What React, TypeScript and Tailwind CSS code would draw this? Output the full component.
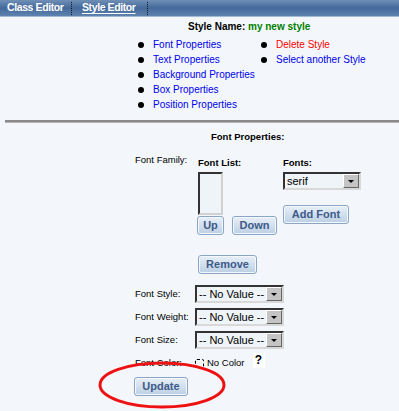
import React from "react";

const arial = { fontFamily: '"Liberation Sans", Arial, sans-serif' };

function Bullet({ children, color }: { children: React.ReactNode; color: string }) {
  return (
    <div className="flex items-center h-[15px]">
      <span className="w-[6px] h-[6px] rounded-full bg-black mr-[9px] shrink-0" />
      <span className={`${color} whitespace-nowrap`}>{children}</span>
    </div>
  );
}

function Btn({ children, w }: { children: React.ReactNode; w: string }) {
  return (
    <div
      className={`${w} h-[19px] flex items-center justify-center rounded-[3px] border border-[#8aa6c6] bg-gradient-to-b from-[#e8f0f8] to-[#bccfe3] text-[#3d5a88] font-bold text-[11px] shadow-[inset_0_0_0_1px_#f4f8fc]`}
    >
      {children}
    </div>
  );
}

function Sel({ value, w }: { value: string; w: string }) {
  return (
    <div
      className={`${w} h-[18px] flex items-stretch border-2 border-t-[#333] border-l-[#333] border-r-[#d8d8d8] border-b-[#d8d8d8] bg-[#eef4f8]`}
    >
      <span className="flex-1 pl-[2px] text-[11px] leading-[14px] text-black whitespace-nowrap overflow-hidden">
        {value}
      </span>
      <span className="w-[16px] bg-[#c4c4c4] border border-t-white border-l-white border-r-[#666] border-b-[#666] flex items-center justify-center">
        <span className="w-0 h-0 border-l-[3px] border-r-[3px] border-t-[3px] border-l-transparent border-r-transparent border-t-black" />
      </span>
    </div>
  );
}

export default function App() {
  return (
    <div className="w-[399px] h-[411px] bg-[#f3f7fb] relative overflow-hidden text-[10px] text-black" style={arial}>
      {/* header */}
      <div className="h-[17px] bg-gradient-to-b from-[#6f8fb6] via-[#44699a] to-[#5f83af] border-b border-[#9fbadb] flex items-center text-white font-bold text-[10.5px] tracking-[-0.4px]">
        <span className="ml-[7px] w-[54px] whitespace-nowrap">Class Editor</span>
        <span className="ml-[10px] h-[13px] border-l border-dotted border-[#111]" />
        <span className="ml-[10px] w-[56px] whitespace-nowrap underline underline-offset-2">Style Editor</span>
        <span className="ml-[9px] h-[13px] border-l border-dotted border-[#111]" />
      </div>

      {/* style name */}
      <div className="pl-[188px] mt-[2px] h-[15px] leading-[15px] font-bold whitespace-nowrap">
        Style Name: <span className="text-[#008000]">my new style</span>
      </div>

      {/* links */}
      <div className="flex pl-[138px] mt-[3px]">
        <div className="w-[123px]">
          <Bullet color="text-[#0000ee]">Font Properties</Bullet>
          <Bullet color="text-[#0000ee]">Text Properties</Bullet>
          <Bullet color="text-[#0000ee]">Background Properties</Bullet>
          <Bullet color="text-[#0000ee]">Box Properties</Bullet>
          <Bullet color="text-[#0000ee]">Position Properties</Bullet>
        </div>
        <div>
          <Bullet color="text-[#ff0000]">Delete Style</Bullet>
          <Bullet color="text-[#0000ee]">Select another Style</Bullet>
        </div>
      </div>

      {/* rule */}
      <div className="ml-[5px] mt-[8px] h-[2px] bg-[#8a8a8a] border-b border-[#b5b5b5] box-content" />

      <div className="text-[9.5px]">
        {/* font properties */}
        <div className="pl-[211px] mt-[7px] h-[14px] leading-[14px] font-bold">Font Properties:</div>

        <div className="flex mt-[8px]">
          <div className="pl-[135px] w-[198px] pt-[1px] whitespace-nowrap">Font Family:</div>
          <div className="w-[85px] pt-[5px]">
            <div className="font-bold h-[12px] leading-[12px] whitespace-nowrap">Font List:</div>
            <div className="mt-[3px] w-[25px] h-[43px] border-2 border-t-[#333] border-l-[#333] border-r-[#d0d0d0] border-b-[#d0d0d0] bg-[#eef4f8]" />
            <div className="flex mt-[1px] -ml-[1px]">
              <Btn w="w-[27px]">Up</Btn>
              <div className="ml-[8px]">
                <Btn w="w-[45px]">Down</Btn>
              </div>
            </div>
          </div>
          <div className="pt-[5px]">
            <div className="font-bold h-[12px] leading-[12px]">Fonts:</div>
            <div className="mt-[3px]">
              <Sel value="serif" w="w-[78px]" />
            </div>
            <div className="mt-[15px]">
              <Btn w="w-[66px]">Add Font</Btn>
            </div>
          </div>
        </div>

        <div className="pl-[198px] mt-[20px]">
          <Btn w="w-[59px]">Remove</Btn>
        </div>

        <div className="mt-[11px] flex flex-col gap-[5px]">
          {["Font Style:", "Font Weight:", "Font Size:"].map((l) => (
            <div key={l} className="flex items-center">
              <span className="pl-[135px] w-[195px] whitespace-nowrap">{l}</span>
              <Sel value="-- No Value --" w="w-[89px]" />
            </div>
          ))}
        </div>

        <div className="flex items-center mt-[5px] h-[18px]">
          <span className="pl-[135px] w-[195px] whitespace-nowrap">Font Color:</span>
          <span className="w-[9px] h-[9px] border border-dashed border-black rounded-[2px] mr-[3px]" />
          <span className="whitespace-nowrap">No Color</span>
          <span className="ml-[8px] -mt-[6px] bg-white w-[12px] h-[15px] flex items-center justify-center font-bold text-[12px]">?</span>
        </div>

        <div className="pl-[134px] mt-[5px]">
          <Btn w="w-[54px]">Update</Btn>
        </div>
      </div>

      <svg className="absolute left-0 top-0 pointer-events-none" width="399" height="411">
        <ellipse cx="162" cy="385" rx="62" ry="22" fill="none" stroke="#ee1111" strokeWidth="3" />
      </svg>
    </div>
  );
}
